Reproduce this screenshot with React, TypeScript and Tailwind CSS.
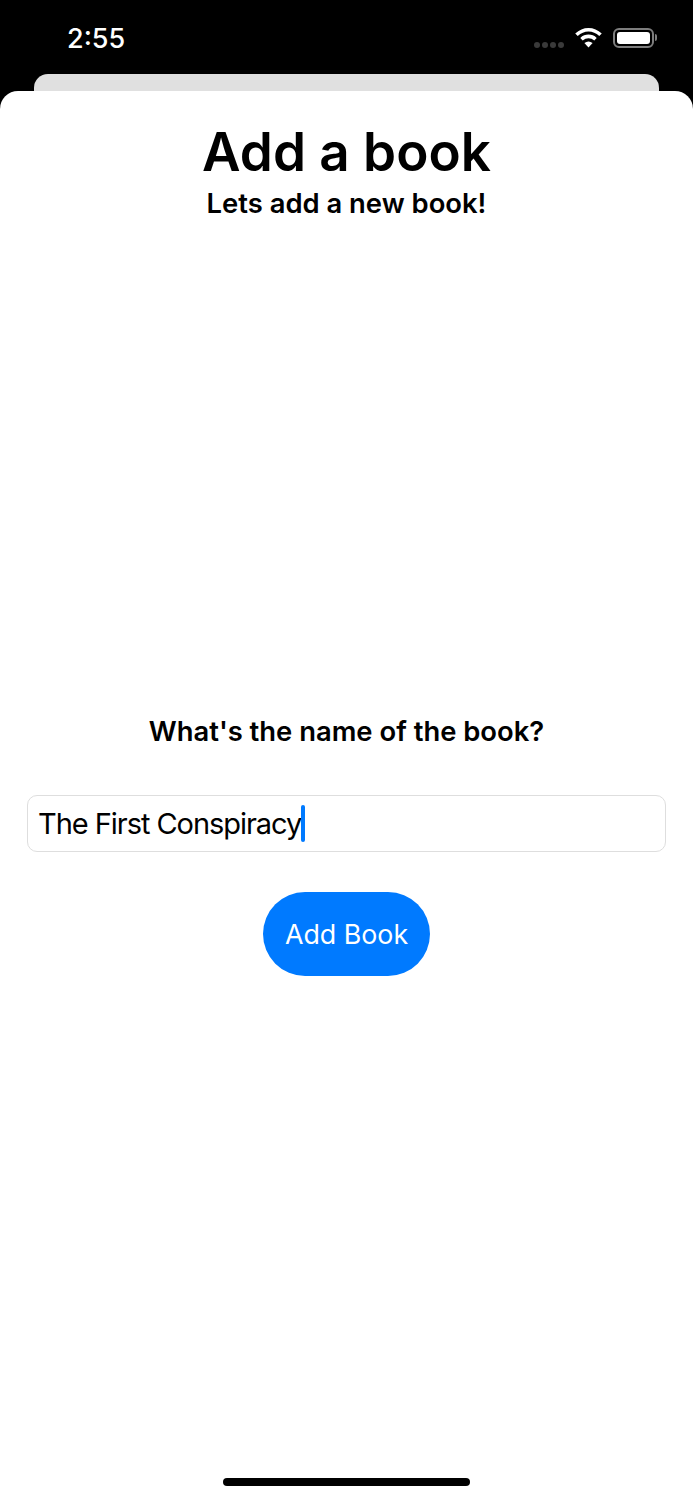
export default function App() {
  return (
    <div className="flex h-[1500px] w-[693px] flex-col overflow-hidden bg-black font-['Inter',sans-serif]">
      <div className="flex h-[74px] shrink-0 items-start justify-between pl-[67px] pr-[36px] pt-[23px]">
        <span className="text-[27px] font-medium leading-[32px] text-white">2:55</span>
        <div className="flex items-center pt-[4px]">
          <div className="mr-[11px] mt-[14px] flex gap-[2px]">
            <span className="h-[6px] w-[6px] rounded-full bg-[#3a3a3a]" />
            <span className="h-[6px] w-[6px] rounded-full bg-[#3a3a3a]" />
            <span className="h-[6px] w-[6px] rounded-full bg-[#3a3a3a]" />
            <span className="h-[6px] w-[6px] rounded-full bg-[#3a3a3a]" />
          </div>
          <svg width="27" height="21" viewBox="0 0 27 21" fill="none" className="mr-[11px]">
            <path d="M1.5 7.8C8.5 1 18.5 1 25.5 7.8" stroke="#fff" strokeWidth="3.6" strokeLinecap="butt" />
            <path d="M6.5 12.2C10.6 8.4 16.4 8.4 20.5 12.2" stroke="#fff" strokeWidth="3.6" />
            <path d="M13.5 20.5L9.4 16C12 14 15 14 17.6 16Z" fill="#fff" />
          </svg>
          <div className="flex items-center">
            <div className="h-[20px] w-[41px] rounded-[6px] border-2 border-[#7d7d7d] p-[2px]">
              <div className="h-full w-full rounded-[3px] bg-white" />
            </div>
            <div className="ml-[1px] h-[7px] w-[2px] rounded-r-full bg-[#7d7d7d]" />
          </div>
        </div>
      </div>
      <div className="mx-[34px] -mb-[13px] h-[30px] shrink-0 rounded-t-[14px] bg-[#e0e0e0]" />
      <div className="relative flex flex-1 flex-col items-center rounded-t-[18px] bg-white">
        <h1 className="mt-[28px] text-[53px] font-semibold leading-[66px] text-black">Add a book</h1>
        <p className="mt-[2px] text-[27.4px] font-semibold leading-[32px] text-black">Lets add a new book!</p>
        <p className="mt-[496px] text-[27.4px] font-semibold leading-[32px] text-black">What's the name of the book?</p>
        <div className="mt-[48px] flex h-[57px] w-[639px] items-center rounded-[10px] border border-[#dedede] pl-[10px]">
          <span className="text-[29px] leading-[36px] tracking-[-1.05px] text-black">The First Conspiracy</span>
          <span className="h-[37px] w-[4px] rounded-full bg-[#007aff]" />
        </div>
        <button className="mt-[40px] flex h-[84px] w-[167px] items-center justify-center rounded-full bg-[#007aff] text-[26.8px] leading-[32px] text-white">
          Add Book
        </button>
        <div className="absolute bottom-[14px] left-[223px] h-[8px] w-[247px] rounded-full bg-black" />
      </div>
    </div>
  );
}
